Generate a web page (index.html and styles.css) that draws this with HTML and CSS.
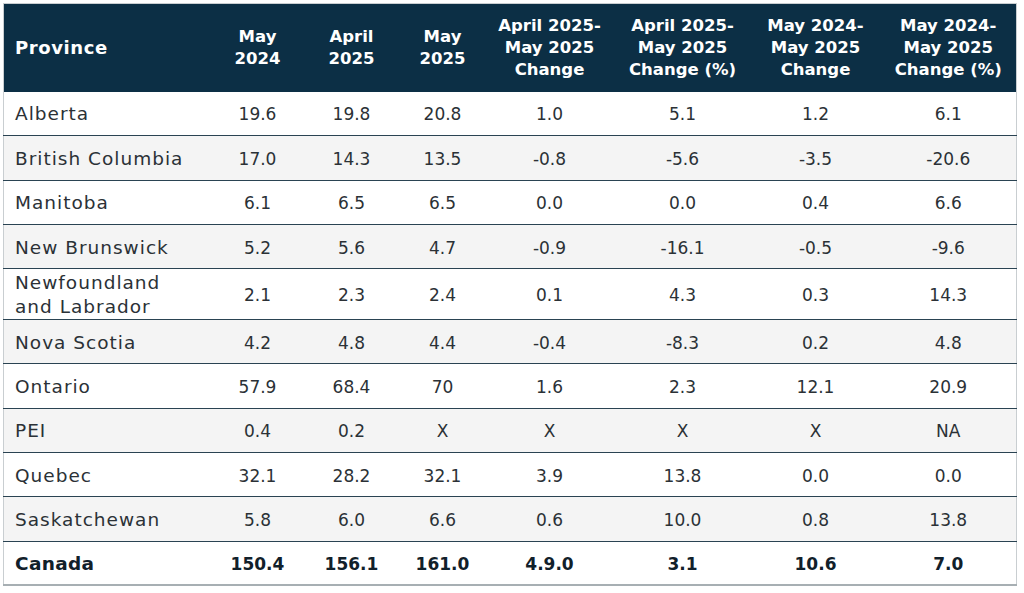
FILE: index.html
```html
<!DOCTYPE html>
<html>
<head>
<meta charset="utf-8">
<link rel="stylesheet" href="styles.css">
</head>
<body>
<div class="wrap">
<table class="data">
<colgroup>
<col class="c-prov"><col class="c1"><col class="c2"><col class="c3"><col class="c4"><col class="c5"><col class="c6"><col class="c7">
</colgroup>
<thead>
<tr>
<th class="prov">Province</th>
<th>May<br>2024</th>
<th>April<br>2025</th>
<th>May<br>2025</th>
<th>April 2025-<br>May 2025<br>Change</th>
<th>April 2025-<br>May 2025<br>Change (%)</th>
<th>May 2024-<br>May 2025<br>Change</th>
<th>May 2024-<br>May 2025<br>Change (%)</th>
</tr>
</thead>
<tbody>
<tr><td class="prov">Alberta</td><td>19.6</td><td>19.8</td><td>20.8</td><td>1.0</td><td>5.1</td><td>1.2</td><td>6.1</td></tr>
<tr><td class="prov">British Columbia</td><td>17.0</td><td>14.3</td><td>13.5</td><td>-0.8</td><td>-5.6</td><td>-3.5</td><td>-20.6</td></tr>
<tr><td class="prov">Manitoba</td><td>6.1</td><td>6.5</td><td>6.5</td><td>0.0</td><td>0.0</td><td>0.4</td><td>6.6</td></tr>
<tr><td class="prov">New Brunswick</td><td>5.2</td><td>5.6</td><td>4.7</td><td>-0.9</td><td>-16.1</td><td>-0.5</td><td>-9.6</td></tr>
<tr class="tall"><td class="prov">Newfoundland<br>and Labrador</td><td>2.1</td><td>2.3</td><td>2.4</td><td>0.1</td><td>4.3</td><td>0.3</td><td>14.3</td></tr>
<tr><td class="prov">Nova Scotia</td><td>4.2</td><td>4.8</td><td>4.4</td><td>-0.4</td><td>-8.3</td><td>0.2</td><td>4.8</td></tr>
<tr><td class="prov">Ontario</td><td>57.9</td><td>68.4</td><td>70</td><td>1.6</td><td>2.3</td><td>12.1</td><td>20.9</td></tr>
<tr><td class="prov">PEI</td><td>0.4</td><td>0.2</td><td>X</td><td>X</td><td>X</td><td>X</td><td>NA</td></tr>
<tr><td class="prov">Quebec</td><td>32.1</td><td>28.2</td><td>32.1</td><td>3.9</td><td>13.8</td><td>0.0</td><td>0.0</td></tr>
<tr><td class="prov">Saskatchewan</td><td>5.8</td><td>6.0</td><td>6.6</td><td>0.6</td><td>10.0</td><td>0.8</td><td>13.8</td></tr>
<tr class="total"><td class="prov">Canada</td><td>150.4</td><td>156.1</td><td>161.0</td><td>4.9.0</td><td>3.1</td><td>10.6</td><td>7.0</td></tr>
</tbody>
</table>
</div>
</body>
</html>
```

FILE: styles.css
```css
html, body {
  margin: 0;
  padding: 0;
  background: #ffffff;
}
.wrap {
  padding: 3px 7px 0 3px;
}
.data {
  width: 1014px;
  border-collapse: collapse;
  table-layout: fixed;
  font-family: "DejaVu Sans", sans-serif;
  font-size: 17px;
  color: #2b3136;
  border: 1px solid #c9ced1;
}
.c-prov { width: 209px; }
.c1 { width: 90px; }
.c2 { width: 98px; }
.c3 { width: 84px; }
.c4 { width: 130px; }
.c5 { width: 136px; }
.c6 { width: 130px; }
.c7 { width: 136px; }
.data thead th {
  background: #0c2f45;
  color: #ffffff;
  font-weight: bold;
  font-size: 16.5px;
  line-height: 22px;
  height: 88px;
  padding: 1px 4px 0;
  text-align: center;
  vertical-align: middle;
  box-sizing: border-box;
}
.data thead th.prov {
  text-align: left;
  padding-left: 11px;
  font-size: 18px;
  letter-spacing: 0.6px;
}
.data tbody td {
  height: 44.3px;
  padding: 2px 4px 0;
  line-height: 24px;
  text-align: center;
  vertical-align: middle;
  border-bottom: 1px solid #2a4352;
  box-sizing: border-box;
}
.data tbody td.prov {
  text-align: left;
  padding-left: 11px;
  font-size: 18.5px;
  letter-spacing: 1px;
}
.data tbody tr:nth-child(even) td {
  background: #f4f4f4;
}
.data tbody tr.tall td {
  height: 50px;
}
.data tbody tr.total td {
  font-weight: bold;
  color: #11202a;
  border-bottom: 2px solid #a7afb3;
}
.data tbody tr.total td.prov {
  letter-spacing: 0.3px;
}
```
